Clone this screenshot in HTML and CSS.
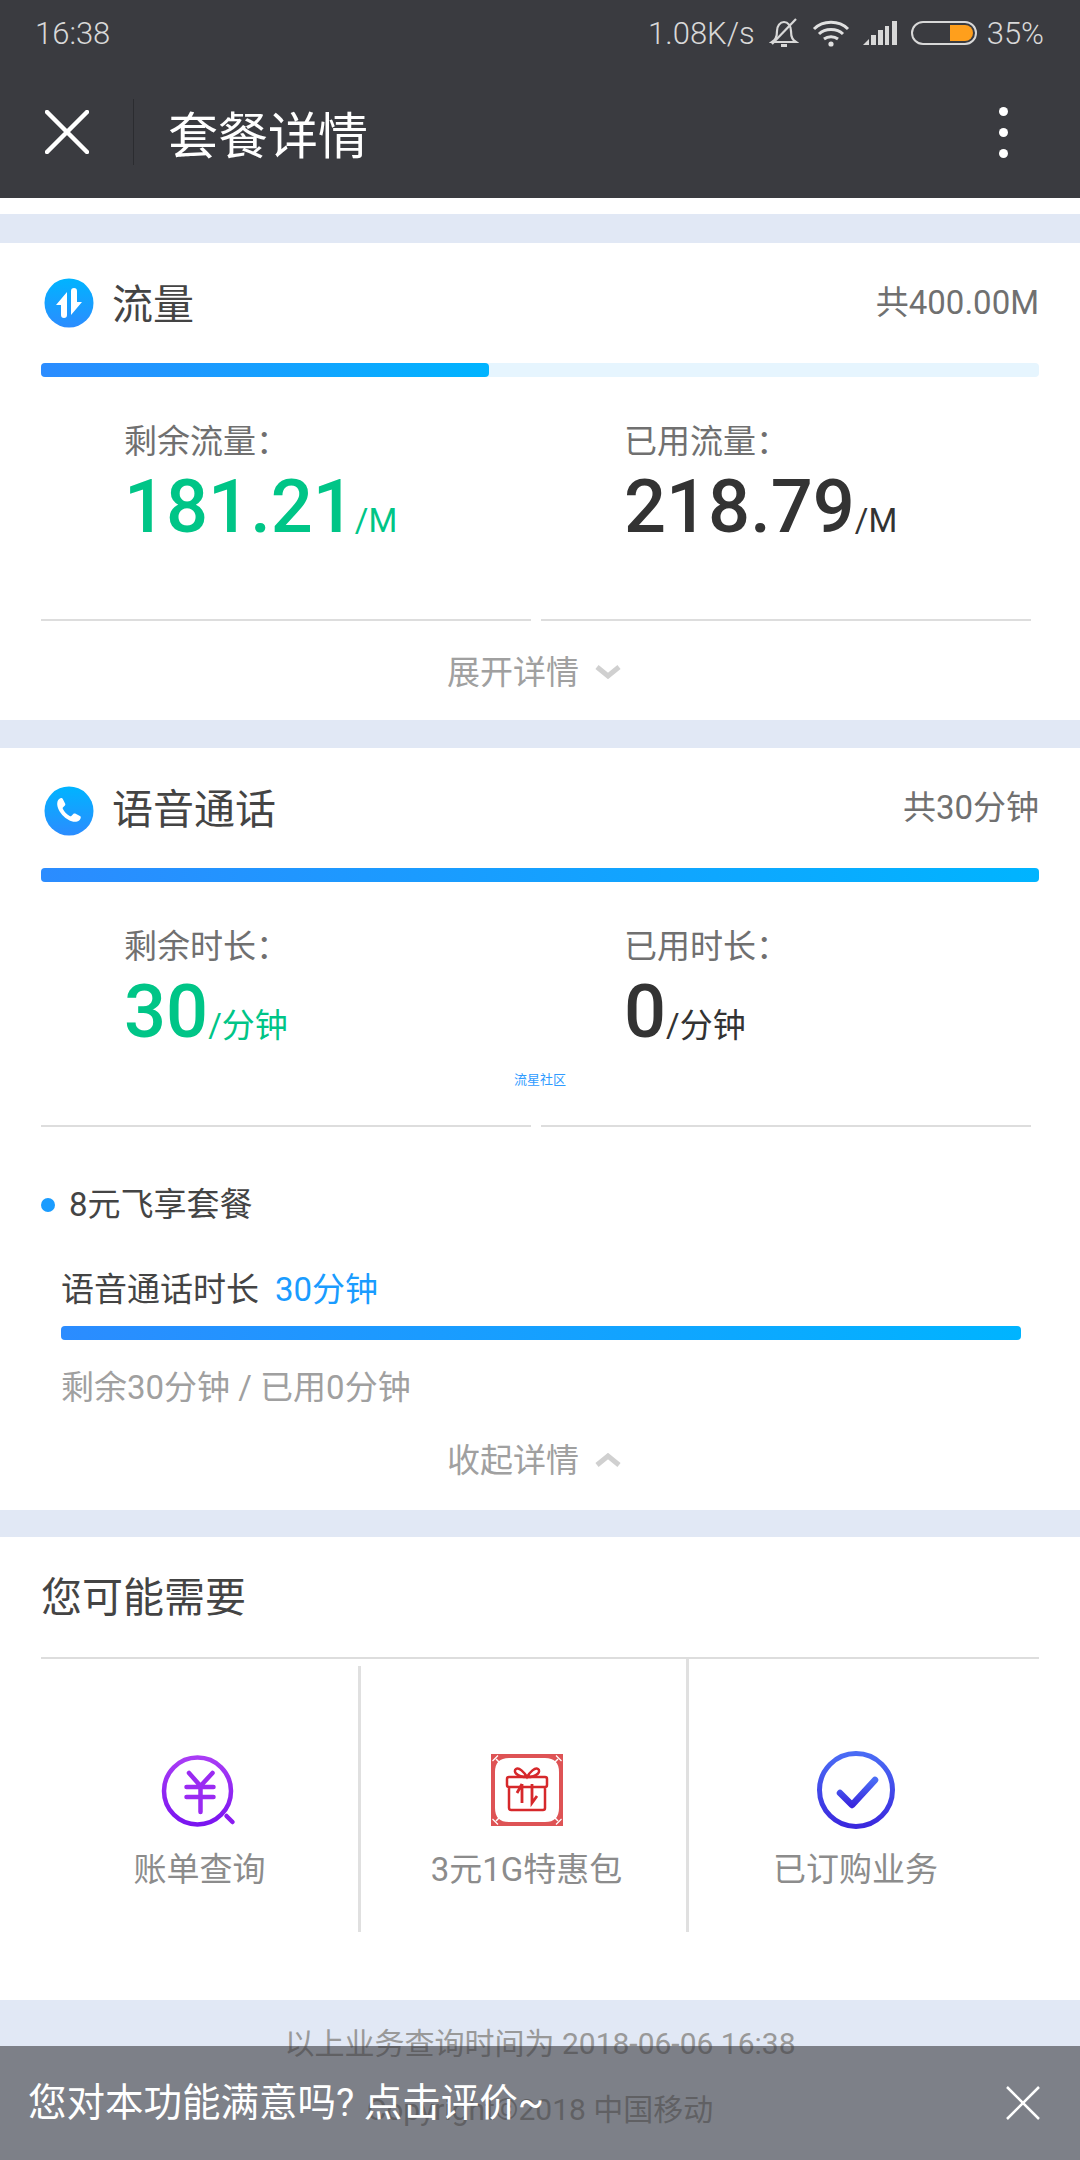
FILE: index.html
```html
<!DOCTYPE html>
<html lang="zh-CN">
<head>
    <meta charset="UTF-8">
    <title>套餐详情</title>
    <link rel="stylesheet" href="styles.css">
</head>
<body>
    <div class="topbar">
        <div class="status">
            <span class="time">16:38</span>
            <div class="status-right">
                <span class="speed">1.08K/s</span>
                <svg class="ic-bell" width="30" height="32" viewBox="0 0 30 32" fill="none" stroke="#d8d8d8" stroke-width="2.2">
                    <path d="M3 25c3-2 5-4 5-11 0-5 3-9 7-9s7 4 7 9c0 7 2 9 5 11z"/>
                    <path d="M12 28.5h6" stroke-width="3"/>
                    <path d="M3 27L27 2"/>
                </svg>
                <svg class="ic-wifi" width="38" height="30" viewBox="0 0 38 30" fill="none" stroke="#e0e0e0" stroke-width="3">
                    <path d="M2 11c9-9 25-9 34 0"/>
                    <path d="M7 16c6-6 18-6 24 0"/>
                    <path d="M12 21c4-3 10-3 14 0"/>
                    <circle cx="19" cy="26" r="2.6" fill="#e0e0e0" stroke="none"/>
                </svg>
                <svg class="ic-signal" width="34" height="24" viewBox="0 0 34 24" fill="#d8d8d8">
                    <path d="M0 24l6-6v6z"/>
                    <rect x="8" y="14" width="5" height="10"/>
                    <rect x="15" y="9" width="5" height="15"/>
                    <rect x="22" y="5" width="4" height="19"/>
                    <rect x="29" y="0" width="5" height="24"/>
                </svg>
                <div class="battery"><div class="battery-fill"></div></div>
                <span class="percent">35%</span>
            </div>
        </div>
        <div class="nav">
            <svg class="nav-close" width="44" height="44" viewBox="0 0 44 44" stroke="#fff" stroke-width="4.5" stroke-linecap="round">
                <path d="M2 2l40 40M42 2L2 42"/>
            </svg>
            <div class="nav-line"></div>
            <h1 class="nav-title">套餐详情</h1>
            <div class="nav-more"><i></i><i></i><i></i></div>
        </div>
    </div>

    <div class="white-gap"></div>

    <section class="card card-data">
        <div class="card-head">
            <svg class="head-icon" width="50" height="50" viewBox="0 0 50 50">
                <defs>
                    <linearGradient id="blue1" x1="0" y1="0" x2="0" y2="1">
                        <stop offset="0" stop-color="#00b4ff"/>
                        <stop offset="1" stop-color="#2b8cff"/>
                    </linearGradient>
                </defs>
                <circle cx="25" cy="25" r="24.5" fill="url(#blue1)"/>
                <path d="M23 14V37a3 3 0 0 1-6 0V27H12z" fill="#fff"/>
                <path d="M27 13a3 3 0 0 1 6 0V24H38L27 37z" fill="#fff"/>
            </svg>
            <h2 class="card-title">流量</h2>
            <span class="card-total">共400.00M</span>
        </div>
        <div class="bar"><div class="bar-fill" style="width: 44.9%"></div></div>
        <div class="stats">
            <div class="stat">
                <div class="stat-label">剩余流量：</div>
                <div class="stat-value green">181.21<small>/M</small></div>
            </div>
            <div class="stat">
                <div class="stat-label">已用流量：</div>
                <div class="stat-value">218.79<small>/M</small></div>
            </div>
        </div>
        <div class="rules"><div></div><div></div></div>
        <div class="toggle">展开详情
            <svg width="26" height="14" viewBox="0 0 26 14" fill="none" stroke="#d0d0d0" stroke-width="5"><path d="M2 2l11 9 11-9"/></svg>
        </div>
    </section>

    <section class="card card-voice">
        <div class="card-head">
            <svg class="head-icon" width="50" height="50" viewBox="0 0 50 50">
                <circle cx="25" cy="25" r="24.5" fill="url(#blue1)"/>
                <path d="M13.500 15.500c.5-1.800 2-3 3.500-3.500.8-.2 1.400.1 1.800.9l2.400 4.800c.3.7.2 1.300-.3 1.800l-2 2c-.3.4-.3.8-.1 1.300 1.500 3.200 4 5.800 7.300 7.400.5.200.9.100 1.200-.2l2-2.100c.5-.5 1.200-.6 1.900-.3l4.700 2.500c.8.400 1 1 .8 1.800-.5 1.700-1.700 3-3.500 3.600C25 38 11 25 13.500 15.500z" fill="#fff"/>
            </svg>
            <h2 class="card-title">语音通话</h2>
            <span class="card-total">共30分钟</span>
        </div>
        <div class="bar"><div class="bar-fill" style="width: 100%"></div></div>
        <div class="stats">
            <div class="stat">
                <div class="stat-label">剩余时长：</div>
                <div class="stat-value green">30<small>/分钟</small></div>
            </div>
            <div class="stat">
                <div class="stat-label">已用时长：</div>
                <div class="stat-value">0<small>/分钟</small></div>
            </div>
        </div>
        <div class="watermark">流星社区</div>
        <div class="rules"><div></div><div></div></div>
        <div class="plan-name">8元飞享套餐</div>
        <div class="plan">
            <div class="plan-line">语音通话时长<span class="plan-amount">30分钟</span></div>
            <div class="bar bar-plan"><div class="bar-fill" style="width: 100%"></div></div>
            <div class="plan-note">剩余30分钟 / 已用0分钟</div>
        </div>
        <div class="toggle toggle-open">收起详情
            <svg width="26" height="14" viewBox="0 0 26 14" fill="none" stroke="#d0d0d0" stroke-width="5"><path d="M2 12l11-9 11 9"/></svg>
        </div>
    </section>

    <section class="card card-more">
        <h2 class="more-title">您可能需要</h2>
        <div class="more-grid">
            <div class="more-item">
                <svg width="80" height="80" viewBox="0 0 80 80" fill="none">
                    <defs>
                        <linearGradient id="purple" x1="0" y1="0" x2="0" y2="1">
                            <stop offset="0" stop-color="#a93cf5"/>
                            <stop offset="1" stop-color="#7a14f0"/>
                        </linearGradient>
                        <linearGradient id="indigo" x1="0" y1="0" x2="0" y2="1">
                            <stop offset="0" stop-color="#4a6cf5"/>
                            <stop offset="1" stop-color="#3a28de"/>
                        </linearGradient>
                    </defs>
                    <circle cx="37.500" cy="41" r="33.500" stroke="url(#purple)" stroke-width="4.500"/>
                    <path d="M66.500 66l6 6" stroke="#8a1cf0" stroke-width="4.500" stroke-linecap="round"/>
                    <path d="M29 23l11.500 13L52.500 23M26.500 37h27M26.500 47h27M40.500 36v26" stroke="#9a2af2" stroke-width="4.500" stroke-linecap="round" stroke-linejoin="round"/>
                </svg>
                <span>账单查询</span>
            </div>
            <div class="more-item">
                <svg width="72" height="72" viewBox="0 0 72 72" fill="none" stroke="#d6282b">
                    <path d="M0 0H72V72H0zM18 4Q4 4 4 18V54Q4 68 18 68H54Q68 68 68 54V18Q68 4 54 4z" fill="#d6282b" fill-opacity=".8" fill-rule="evenodd" stroke="none"/>
                    <path d="M7 1.500L1.500 7M65 1.500L70.500 7M7 70.500L1.500 65M65 70.500L70.500 65" stroke="#fff" stroke-width="1.200"/>
                    <path d="M5 5l4 4M67 5l-4 4M5 67l4-4M67 67l-4-4" stroke="#fff" stroke-width="1.500"/>
                    <path d="M18 23h36q2 0 2 2v6q0 2-2 2H18q-2 0-2-2v-6q0-2 2-2zM18 33v21q0 2 2 2h32q2 0 2-2V33" stroke-width="2.500"/>
                    <path d="M36 23c-3-5-8-10-11-8s0 8 11 8c11 0 14-6 11-8s-8 3-11 8z" stroke-width="2.500"/>
                    <path d="M31 30v19M31 30l-5 9M41 30v19l5-7" stroke-width="2.800"/>
                </svg>
                <span>3元1G特惠包</span>
            </div>
            <div class="more-item">
                <svg width="80" height="80" viewBox="0 0 80 80" fill="none">
                    <circle cx="40" cy="40" r="36.500" stroke="url(#indigo)" stroke-width="5"/>
                    <path d="M24 43l12 12 23-25" stroke="url(#indigo)" stroke-width="6.500" stroke-linecap="round" stroke-linejoin="round"/>
                </svg>
                <span>已订购业务</span>
            </div>
        </div>
    </section>

    <footer class="foot">
        <p>以上业务查询时间为 2018-06-06 16:38</p>
        <p>Copyright©2018 中国移动</p>
    </footer>

    <div class="toast">
        <span class="toast-text">您对本功能满意吗? 点击评价~</span>
        <svg width="34" height="34" viewBox="0 0 34 34" stroke="#fff" stroke-width="2.500"><path d="M1 1l32 32M33 1L1 33"/></svg>
    </div>
</body>
</html>
```

FILE: styles.css
```css
* {
    box-sizing: border-box;
}

body {
    margin: 0;
    width: 1080px;
    height: 2160px;
    overflow: hidden;
    position: relative;
    background-color: #e1e8f5;
    font-family: Roboto, "Noto Sans CJK SC", sans-serif;
    color: #333;
}

h1, h2, p {
    margin: 0;
    font-weight: 400;
}

.topbar {
    height: 198px;
    background-color: #3a3b40;
}

.status {
    height: 66px;
    padding: 0 36px 0 35px;
    display: flex;
    justify-content: space-between;
    align-items: center;
    color: #d8d8d8;
    font-size: 31px;
    font-weight: 300;
}

.status-right {
    display: flex;
    align-items: center;
}

.ic-bell {
    margin-left: 14px;
}

.ic-wifi {
    margin-left: 13px;
}

.ic-signal {
    margin-left: 13px;
}

.battery {
    width: 66px;
    height: 24px;
    margin: 0 10px 0 14px;
    padding: 2px;
    border: 2px solid #d8d8d8;
    border-radius: 12px;
    display: flex;
    justify-content: flex-end;
}

.battery-fill {
    width: 23px;
    background-color: #ff9f1c;
    border-radius: 0 9px 9px 0;
}

.nav {
    height: 132px;
    padding: 0 45px 0 45px;
    display: flex;
    align-items: center;
}

.nav-line {
    width: 1px;
    height: 66px;
    margin-left: 44px;
    background-color: #2b2c30;
}

.nav-title {
    margin-left: 34px;
    font-size: 50px;
    color: #fff;
}

.nav-more {
    margin-left: auto;
    margin-right: 27px;
    display: flex;
    flex-direction: column;
    gap: 12px;
}

.nav-more i {
    display: block;
    width: 9px;
    height: 9px;
    border-radius: 50%;
    background-color: #fff;
}

.white-gap {
    height: 16px;
    background-color: #fff;
}

.card {
    position: relative;
    background-color: #fff;
    padding: 0 41px;
}

.card-data {
    margin-top: 29px;
    height: 477px;
}

.card-voice {
    margin-top: 28px;
    height: 762px;
}

.card-more {
    margin-top: 27px;
    height: 463px;
}

.card-head {
    height: 120px;
    padding-left: 3px;
    display: flex;
    align-items: center;
}

.card-voice .head-icon {
    margin-top: 6px;
}

.card-title {
    margin: 0 0 4px 18px;
    font-size: 41px;
    color: #444;
}

.card-total {
    margin: 0 0 6px auto;
    font-size: 33px;
    color: #707070;
}

.bar {
    height: 14px;
    border-radius: 4px;
    background-color: #e6f5fe;
}

.bar-fill {
    height: 100%;
    border-radius: 4px;
    background: linear-gradient(90deg, #2b8cff, #00b4ff);
}

.stats {
    display: flex;
    padding: 43px 0 0 83px;
}

.stat {
    flex: none;
    width: 500px;
}

.stat-label {
    font-size: 33px;
    line-height: 44px;
    color: #707070;
}

.stat-value {
    font-size: 74px;
    font-weight: 500;
    line-height: 86px;
    color: #333;
}

.stat-value.green {
    color: #00c587;
}

.stat-value small {
    font-size: 33px;
    font-weight: 400;
}

.rules {
    display: flex;
    gap: 10px;
    margin-top: 55px;
}

.card-voice .rules {
    margin-top: 56px;
}

.rules div {
    width: 490px;
    height: 2px;
    background-color: #ddd;
}

.toggle {
    height: 98px;
    padding-right: 12px;
    display: flex;
    justify-content: center;
    align-items: center;
    gap: 16px;
    font-size: 33px;
    color: #a0a0a0;
}

.toggle svg {
    margin-top: 3px;
}

.toggle-open {
    height: 64px;
    margin-top: 16px;
}

.watermark {
    position: absolute;
    left: 514px;
    top: 321px;
    font-size: 13px;
    color: #2f9bff;
}

.plan-name {
    position: relative;
    margin-top: 56px;
    padding-left: 28px;
    font-size: 33px;
    line-height: 44px;
    color: #444;
}

.plan-name::before {
    content: "";
    position: absolute;
    left: 0;
    top: 15px;
    width: 14px;
    height: 14px;
    border-radius: 50%;
    background-color: #1a9cff;
}

.plan {
    margin: 0 18px 0 20px;
}

.plan-line {
    margin-top: 41px;
    font-size: 33px;
    line-height: 44px;
    color: #444;
}

.plan-amount {
    margin-left: 16px;
    color: #1a9cff;
}

.bar-plan {
    margin-top: 14px;
}

.plan-note {
    margin-top: 26px;
    font-size: 33px;
    line-height: 44px;
    color: #a0a0a0;
}

.more-title {
    height: 122px;
    line-height: 122px;
    font-size: 41px;
    color: #444;
    border-bottom: 2px solid #ddd;
}

.more-grid {
    display: grid;
    grid-template-columns: 317px 328px 336px;
    height: 273px;
}

.more-item {
    display: flex;
    flex-direction: column;
    align-items: center;
    padding-top: 91px;
    font-size: 33px;
    color: #8c8c8c;
}

.more-item + .more-item {
    border-left: 3px solid #e0e0e0;
}

.more-item:nth-child(2) {
    margin-top: 7px;
    padding-top: 84px;
    padding-left: 6px;
}

.more-item svg {
    height: 80px;
    margin-bottom: 13px;
}

.foot {
    padding-top: 22px;
    text-align: center;
    font-size: 30px;
    color: #999;
}

.foot p {
    line-height: 44px;
    margin-bottom: 22px;
}

.toast {
    position: absolute;
    left: 0;
    right: 0;
    bottom: 0;
    height: 114px;
    padding: 0 40px 0 28px;
    display: flex;
    justify-content: space-between;
    align-items: center;
    background-color: rgba(58, 59, 64, 0.6);
    color: #fff;
    font-size: 38.500px;
}

.toast-text {
    margin-bottom: 8px;
}
```
